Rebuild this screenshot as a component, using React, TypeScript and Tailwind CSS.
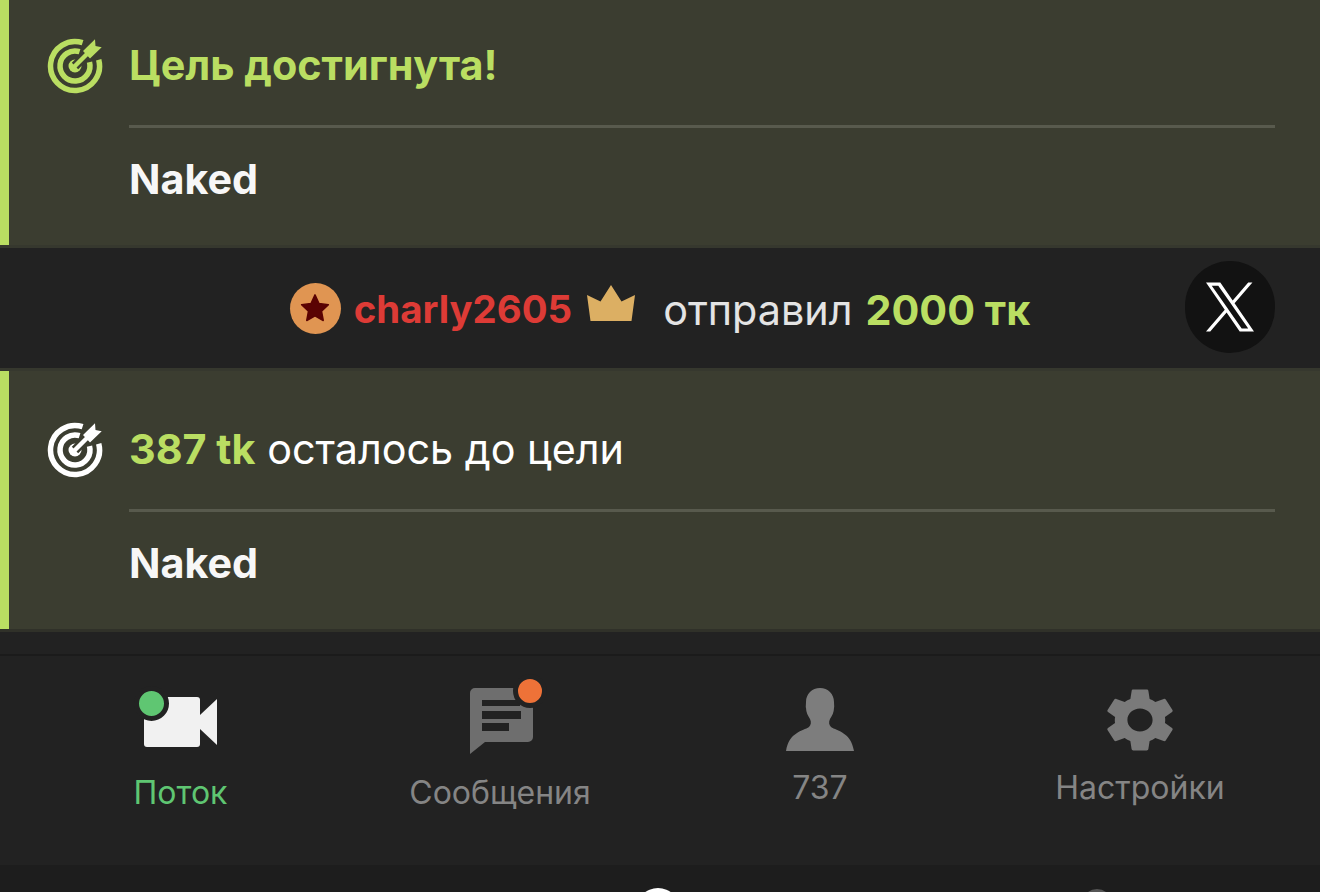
import React from 'react';

const LIME = '#bade62';

function TargetIcon({ color }: { color: string }) {
  return (
    <svg width="56" height="56" viewBox="0 0 56 56" fill="none" className="shrink-0">
      <path d="M35.6 4.7A24.5 24.5 0 1 0 51.7 21.7" stroke={color} strokeWidth="5.5" />
      <path d="M32.6 13.7A15 15 0 1 0 42.5 24.1" stroke={color} strokeWidth="5.5" />
      <circle cx="28" cy="28" r="6.5" fill={color} />
      <path d="M28 28L42 14" stroke="#3b3d30" strokeWidth="9" />
      <path d="M27 29L41 15" stroke={color} strokeWidth="4.5" />
      <path d="M36 13L48 1.3L48.5 8L54.7 9.3L43 20.5Z" fill={color} />
    </svg>
  );
}

function GoalCard({ icon, title, label }: { icon: string; title: React.ReactNode; label: string }) {
  return (
    <section className="flex border-l-[9px] border-l-[#bade62] bg-[#3b3d30] pl-[38px] pr-[45px] h-[258px]">
      <div className="pt-[51px] mr-[26px]">
        <TargetIcon color={icon} />
      </div>
      <div className="flex-1">
        <div className="h-[138px] pt-[50px]">
          <div className="h-[56px] leading-[56px] text-[41.3px] text-white whitespace-nowrap">{title}</div>
        </div>
        <div className="h-[3px] bg-[#585a4d]" />
        <div className="pt-[23px] h-[56px] box-content leading-[56px] text-[41.3px] font-bold text-[#f7f7f7]">{label}</div>
      </div>
    </section>
  );
}

function TipBand() {
  return (
    <div className="relative flex items-center justify-center h-[120px] mt-[3px] mb-[3px] bg-[#222222]">
      <div className="flex items-center">
        <span className="flex items-center justify-center w-[51px] h-[51px] rounded-full bg-[#e09552]">
          <svg width="30" height="30" viewBox="0 0 24 24">
            <path d="M12 1.5l3.2 6.9 7.5.9-5.5 5.2 1.4 7.5-6.6-3.7-6.6 3.7 1.4-7.5L1.3 9.3l7.5-.9z" fill="#5a0303" stroke="#5a0303" strokeWidth="1.2" strokeLinejoin="round" />
          </svg>
        </span>
        <span className="ml-[13px] mt-[3px] text-[38.4px] font-bold text-[#dd3b36]">charly2605</span>
        <svg width="48" height="36" viewBox="0 0 48 36" className="ml-[15px] mb-[10px]">
          <path d="M24 0L34.5 16.5L48 10L44.5 36H3.5L0 10L13.5 16.5Z" fill="#dcaf63" />
        </svg>
        <span className="ml-[28px] mt-[6px] text-[41.3px] text-[#e4e4e4]">отправил</span>
        <span className="ml-[13px] mt-[6px] text-[41.3px] font-bold text-[#bade62]">2000 тк</span>
      </div>
      <button className="absolute right-[45px] top-[13px] flex items-center justify-center w-[90px] h-[92px] rounded-full bg-[#121212]">
        <svg width="48" height="50" viewBox="0 0 1200 1227" fill="#ffffff">
          <path d="M714.163 519.284L1160.89 0H1055.03L667.137 450.887L357.328 0H0L468.492 681.821L0 1226.37H105.866L515.491 750.218L842.672 1226.37H1200L714.137 519.284H714.163ZM569.165 687.828L521.697 619.934L144.011 79.6944H306.615L611.412 515.685L658.88 583.579L1055.08 1150.3H892.476L569.165 687.854V687.828Z" />
        </svg>
      </button>
    </div>
  );
}

function NavItem({ icon, label, className }: { icon: React.ReactNode; label: string; className: string }) {
  return (
    <div className="flex flex-col items-center">
      <div className="flex items-end justify-center h-[100px]">{icon}</div>
      <div className={className}>{label}</div>
    </div>
  );
}

const CameraIcon = (
  <div className="relative mb-[8px] ml-[1px]">
    <svg width="74" height="52" viewBox="0 0 74 52" fill="#f1f1f1" className="block">
      <rect x="0" y="1" width="56" height="50" rx="3" />
      <path d="M56 19L73 3V49L56 33Z" />
    </svg>
    <span className="absolute -left-[10px] -top-[10px] w-[25px] h-[25px] box-content rounded-full bg-[#5fc672] border-[5px] border-[#222222]" />
  </div>
);

const ChatIcon = (
  <div className="relative mb-[2px] ml-[3px]">
    <svg width="63" height="66" viewBox="0 0 63 66" className="block">
      <path d="M5 0H58a5 5 0 0 1 5 5V49a5 5 0 0 1-5 5H15L0 66V5a5 5 0 0 1 5-5Z" fill="#6e6e6e" />
      <rect x="12" y="12" width="38" height="6" fill="#222222" />
      <rect x="12" y="23" width="39" height="8" fill="#222222" />
      <rect x="12" y="35" width="27" height="8" fill="#222222" />
    </svg>
    <span className="absolute -right-[14px] -top-[14px] w-[24px] h-[24px] box-content border-[5px] border-[#222222] rounded-full bg-[#ee7238]" />
  </div>
);

const PersonIcon = (
  <svg width="68" height="63" viewBox="0 0 68 63" fill="#7d7d7d" className="mb-[5px]">
    <path d="M34 0C26 0 20 6 20 14C20 17 19.5 19 20 20C20 24 22 28 24 31C25.5 34 25 37 23 39C17 43 3 44 0 63H68C65 44 51 43 45 39C43 37 42.5 34 44 31C46 28 48 24 48 20C48.5 19 48 17 48 14C48 6 42 0 34 0Z" />
  </svg>
);

const GearIcon = (
  <svg width="84" height="76" viewBox="0 0 24 24" preserveAspectRatio="none" fill="#7a7a7a" className="-mb-[2px]">
    <path d="M19.14 12.94c.04-.3.06-.61.06-.94 0-.32-.02-.64-.07-.94l2.03-1.58c.18-.14.23-.41.12-.61l-1.92-3.32c-.12-.22-.37-.29-.59-.22l-2.39.96c-.5-.38-1.03-.7-1.62-.94l-.36-2.54c-.04-.24-.24-.41-.48-.41h-3.84c-.24 0-.43.17-.47.41l-.36 2.54c-.59.24-1.13.57-1.62.94l-2.39-.96c-.22-.08-.47 0-.59.22L2.74 8.87c-.12.21-.08.47.12.61l2.03 1.58c-.05.3-.09.63-.09.94s.02.64.07.94l-2.03 1.58c-.18.14-.23.41-.12.61l1.92 3.32c.12.22.37.29.59.22l2.39-.96c.5.38 1.03.7 1.62.94l.36 2.54c.05.24.24.41.48.41h3.84c.24 0 .44-.17.47-.41l.36-2.54c.59-.24 1.13-.56 1.62-.94l2.39.96c.22.08.47 0 .59-.22l1.92-3.32c.12-.22.07-.47-.12-.61l-2.01-1.58zM12 15.6c-1.98 0-3.6-1.62-3.6-3.6s1.62-3.6 3.6-3.6 3.6 1.62 3.6 3.6-1.62 3.6-3.6 3.6z" />
  </svg>
);

export default function App() {
  return (
    <div className="relative h-[892px] w-[1320px] overflow-hidden bg-[#222222] font-['Inter',sans-serif]">
      <div className="-mt-[13px] bg-[#36382e]">
        <GoalCard
          icon={LIME}
          label="Naked"
          title={<span className="font-bold text-[#bade62]">Цель достигнута!</span>}
        />
        <TipBand />
        <GoalCard
          icon="#ffffff"
          label="Naked"
          title={<><span className="font-bold text-[#bade62]">387 tk</span> осталось до цели</>}
        />
      </div>

      <div className="h-[25px] bg-[#222222] border-t-[3px] border-[#303129]" />

      <nav className="border-t-2 border-[#1b1b1b] bg-[#222222] h-[211px] px-5 grid grid-cols-4 text-[32px]">
        <NavItem icon={CameraIcon} label="Поток" className="mt-[17px] leading-[40px] text-[#5fc672] ml-[1px]" />
        <NavItem icon={ChatIcon} label="Сообщения" className="mt-[17px] leading-[40px] text-[#858585]" />
        <NavItem icon={PersonIcon} label="737" className="mt-[12px] leading-[40px] text-[#858585]" />
        <NavItem icon={GearIcon} label="Настройки" className="mt-[12px] leading-[40px] text-[#858585]" />
      </nav>

      <div className="h-[30px] bg-[#1d1d1d]" />
      <span className="absolute left-[636px] top-[888px] w-[44px] h-[44px] rounded-full bg-white" />
      <span className="absolute left-[1082px] top-[889px] w-[30px] h-[30px] rounded-full bg-[#555555]" />
    </div>
  );
}
